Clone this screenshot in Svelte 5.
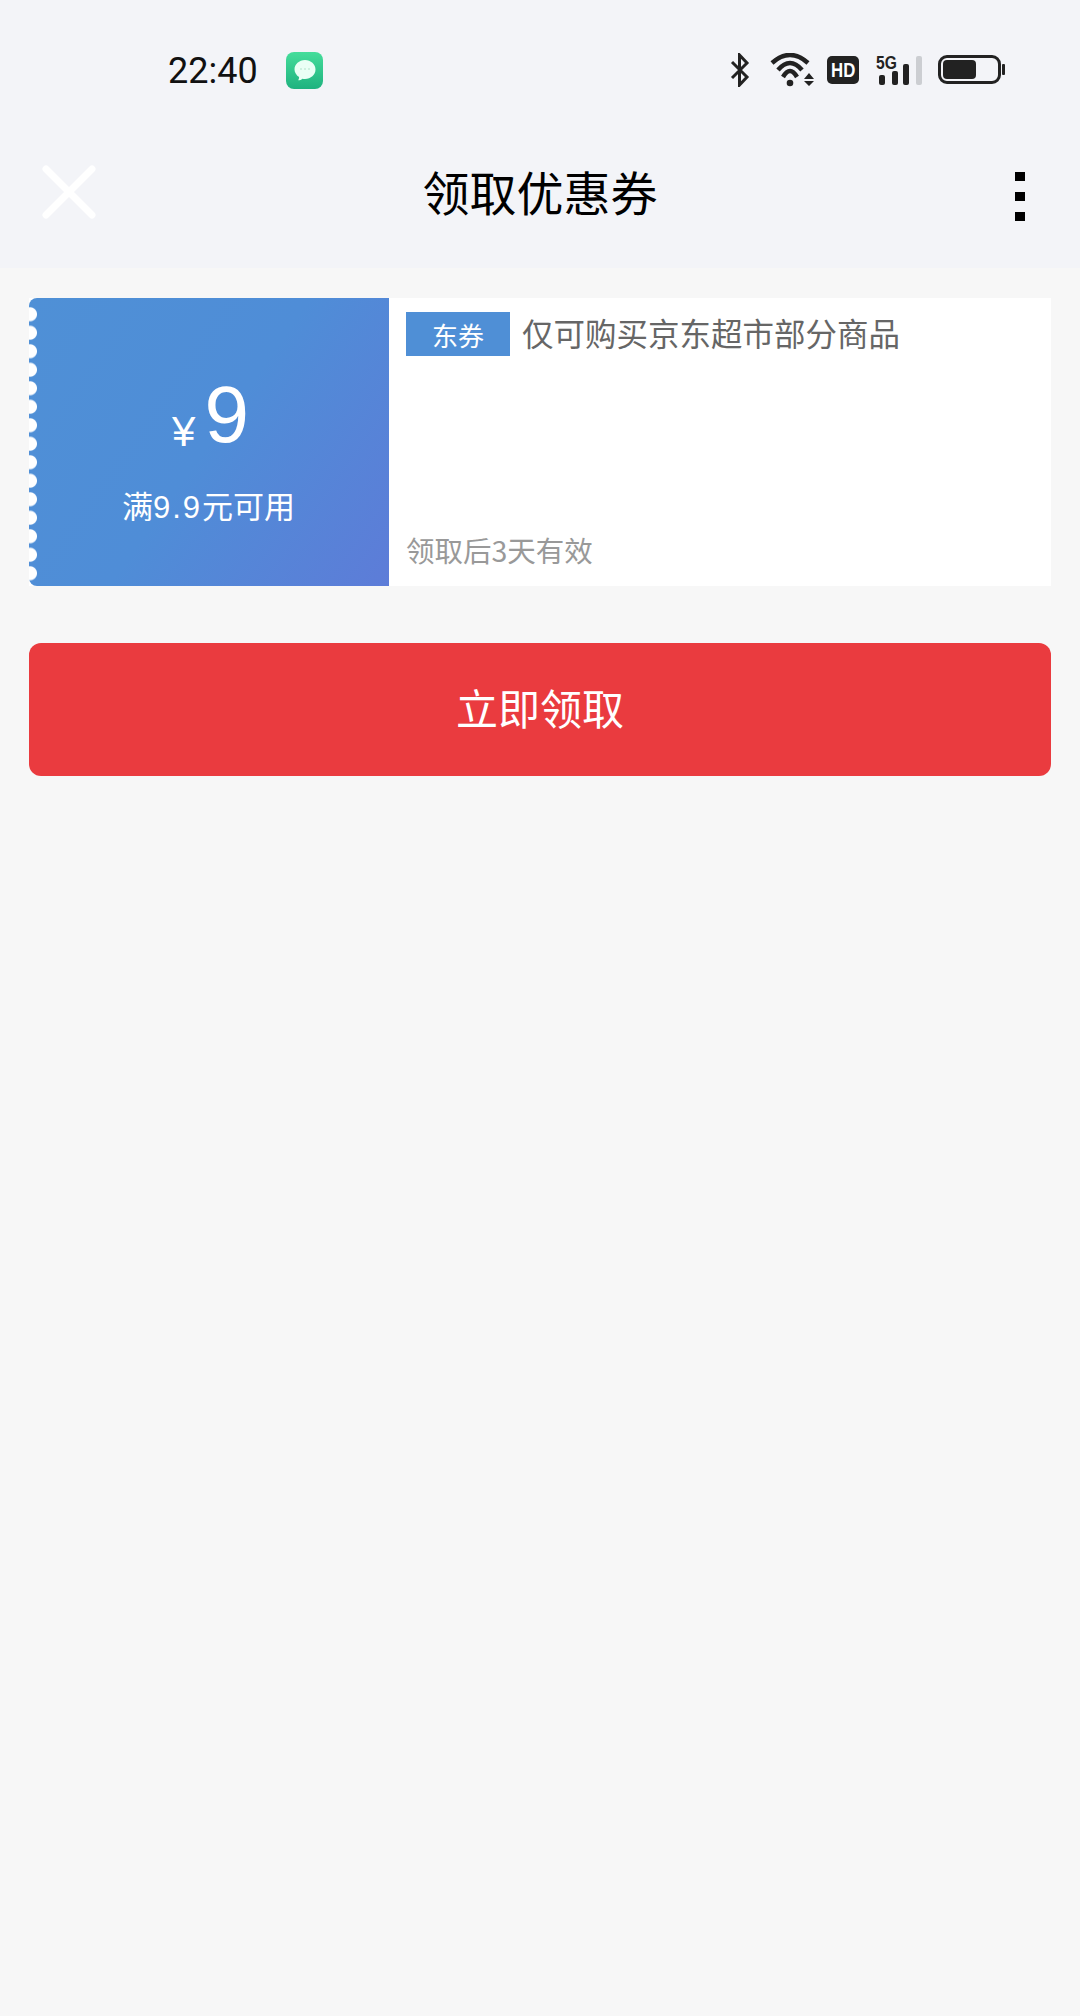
<script>
	const desc = '仅可购买京东超市部分商品';
	const valid = '领取后3天有效';
</script>

<div class="page">
	<header class="top">
		<div class="status">
			<div class="status-left">
				<span class="time">22:40</span>
				<svg class="msg" viewBox="0 0 37 37" width="37" height="37">
					<defs>
						<linearGradient id="msgbg" x1="0" y1="0" x2="0" y2="1">
							<stop offset="0" stop-color="#45dd9b" />
							<stop offset="1" stop-color="#1fb27f" />
						</linearGradient>
					</defs>
					<rect width="37" height="37" rx="8" fill="url(#msgbg)" />
					<path d="M19 8c5.800 0 10.500 4.300 10.500 9.500S24.800 27 19 27c-.9 0-1.800-.1-2.600-.3-1.200 1-2.600 1.500-4.200 1.600 .6-1 .9-2.100.9-3.200-2.500-1.700-4.600-4.500-4.600-7.600C8.500 12.300 13.200 8 19 8z" fill="#eafff5" />
					<circle cx="15" cy="17" r="1" fill="#c4ecd9" />
					<circle cx="19" cy="17" r="1" fill="#c4ecd9" />
					<circle cx="23" cy="17" r="1" fill="#c4ecd9" />
				</svg>
			</div>
			<div class="status-right">
				<svg class="bt" viewBox="0 0 20 34" width="20" height="34">
					<path d="M2 9l15 15-7.500 8V2L17 10 2 25" fill="none" stroke="#222" stroke-width="3" />
				</svg>
				<svg class="wifi" viewBox="0 0 46 34" width="46" height="34">
					<path d="M2 10Q20-6 38 10" fill="none" stroke="#222" stroke-width="4.500" />
					<path d="M8 17Q20 3 32 17" fill="none" stroke="#222" stroke-width="4.500" />
					<path d="M13 24Q20 12 27 24" fill="none" stroke="#222" stroke-width="4.500" />
					<circle cx="20" cy="30" r="3.300" fill="#222" />
					<path d="M34 26l5-6 5 6zM34 28l5 5 5-5z" fill="#222" />
				</svg>
				<span class="hd"><span>HD</span></span>
				<div class="signal">
					<span class="fiveg">5G</span>
					<svg viewBox="0 0 46 31" width="46" height="31">
						<rect x="3" y="20" width="6" height="10" rx="2" fill="#222" />
						<rect x="16" y="16" width="6" height="14" rx="2" fill="#222" />
						<rect x="27" y="9" width="6" height="21" rx="2" fill="#222" />
						<rect x="40" y="1" width="6" height="29" rx="2" fill="#ccced2" />
					</svg>
				</div>
				<div class="battery">
					<div class="shell"><div class="level"></div></div>
					<div class="nub"></div>
				</div>
			</div>
		</div>
		<div class="nav">
			<svg class="close" viewBox="0 0 54 54" width="54" height="54">
				<path d="M4 4l46 46M50 4L4 50" fill="none" stroke="#fff" stroke-width="7" stroke-linecap="round" />
			</svg>
			<h1>领取优惠券</h1>
			<div class="more"><i></i><i></i><i></i></div>
		</div>
	</header>

	<main class="content">
		<section class="coupon">
			<div class="amount">
				<div class="edge"></div>
				<div class="price"><span class="yen">¥</span><span class="num">9</span></div>
				<div class="limit">满<span class="digits">9.9</span>元可用</div>
			</div>
			<div class="info">
				<div class="line">
					<span class="tag">东券</span>
					<span class="desc">{desc}</span>
				</div>
				<div class="valid">{valid}</div>
			</div>
		</section>
		<button class="take">立即领取</button>
	</main>
</div>

<style>
	:global(body) {
		background: #f7f7f7;
	}
	.page {
		min-height: 2016px;
		background: #f7f7f7;
		font-family: 'Noto Sans CJK SC', 'Liberation Sans', sans-serif;
	}
	.top {
		height: 268px;
		background: #f3f4f8;
	}
	.status {
		height: 140px;
		display: flex;
		justify-content: space-between;
		align-items: center;
		padding: 0 75px 0 168px;
		box-sizing: border-box;
	}
	.status-left {
		display: flex;
		align-items: center;
		gap: 28px;
	}
	.time {
		font-family: 'Roboto', 'Liberation Sans', sans-serif;
		font-size: 36px;
		line-height: 44px;
		padding-top: 2px;
		color: #111;
	}
	.status-right {
		display: flex;
		align-items: center;
	}
	.bt {
		margin-right: 20px;
	}
	.wifi {
		margin-right: 11px;
	}
	.hd {
		width: 32px;
		height: 28px;
		background: #222;
		border-radius: 5px;
		color: #fff;
		font-family: 'Liberation Sans', sans-serif;
		font-weight: 700;
		font-size: 21px;
		line-height: 28px;
		text-align: center;
		margin-right: 17px;
		display: flex;
		justify-content: center;
	}
	.hd span {
		display: block;
		transform: scaleX(0.8);
	}
	.signal {
		position: relative;
		width: 46px;
		height: 31px;
		margin-right: 16px;
	}
	.fiveg {
		position: absolute;
		left: 0;
		top: -1px;
		font-family: 'Liberation Sans', sans-serif;
		font-weight: 700;
		font-size: 19px;
		line-height: 17px;
		color: #222;
		transform: scaleX(0.82);
		transform-origin: left center;
	}
	.battery {
		display: flex;
		align-items: center;
		gap: 1px;
		position: relative;
		top: -1px;
	}
	.shell {
		width: 63px;
		height: 29px;
		box-sizing: border-box;
		border: 3px solid #222;
		border-radius: 9px;
		padding: 2px;
	}
	.level {
		width: 33px;
		height: 100%;
		background: #222;
		border-radius: 4px;
	}
	.nub {
		width: 3px;
		height: 11px;
		background: #222;
		border-radius: 1px;
	}
	.nav {
		height: 117px;
		display: flex;
		align-items: center;
		justify-content: center;
		position: relative;
		margin-top: -8px;
	}
	.close {
		position: absolute;
		left: 42px;
		top: 33px;
	}
	h1 {
		margin: 0;
		font-size: 47px;
		font-weight: 400;
		color: #000;
	}
	.more {
		position: absolute;
		right: 55px;
		top: 40px;
		display: flex;
		flex-direction: column;
		gap: 11px;
	}
	.more i {
		display: block;
		width: 10px;
		height: 9px;
		background: #000;
	}
	.content {
		padding: 30px 29px 0;
	}
	.coupon {
		display: flex;
		height: 288px;
		background: #fff;
	}
	.amount {
		position: relative;
		width: 360px;
		flex-shrink: 0;
		display: flex;
		flex-direction: column;
		align-items: center;
		background: linear-gradient(125deg, #4f90d6 0%, #4f8dd7 50%, #5d7cd8 100%);
		color: #fff;
		border-radius: 8px 0 0 8px;
	}
	.edge {
		position: absolute;
		left: 0;
		top: 7px;
		bottom: 4px;
		width: 8px;
		background: radial-gradient(circle at 1px 50%, #fff 6.500px, transparent 7.500px) 0 0 / 8px 18.500px repeat-y;
	}
	.price {
		display: flex;
		align-items: baseline;
		margin: 71px 0 0 3px;
		height: 92px;
		font-family: 'Liberation Sans', sans-serif;
	}
	.yen {
		font-size: 42px;
		line-height: 92px;
		margin-right: 9px;
		position: relative;
		top: 4px;
	}
	.num {
		font-size: 80px;
		line-height: 92px;
	}
	.limit {
		margin-top: 22px;
		font-size: 31px;
		line-height: 44px;
		padding-right: 1px;
	}
	.digits {
		font-family: 'Liberation Sans', sans-serif;
		letter-spacing: 2px;
	}
	.info {
		flex: 1;
		display: flex;
		flex-direction: column;
		justify-content: space-between;
		padding: 14px 18px 14px 17px;
	}
	.line {
		display: flex;
		align-items: center;
		gap: 12px;
	}
	.tag {
		width: 104px;
		height: 44px;
		background: #4f8fd6;
		color: #fff;
		font-size: 26px;
		line-height: 46px;
		text-align: center;
	}
	.desc {
		font-size: 31.500px;
		line-height: 44px;
		color: #666;
		position: relative;
		top: -2px;
	}
	.valid {
		font-size: 28.500px;
		line-height: 44px;
		color: #999;
	}
	.take {
		display: block;
		width: 100%;
		height: 133px;
		margin-top: 57px;
		border: 0;
		padding: 0 0 6px;
		border-radius: 12px;
		background: #ea3b3f;
		color: #fff;
		font-family: inherit;
		font-size: 42px;
	}
</style>
